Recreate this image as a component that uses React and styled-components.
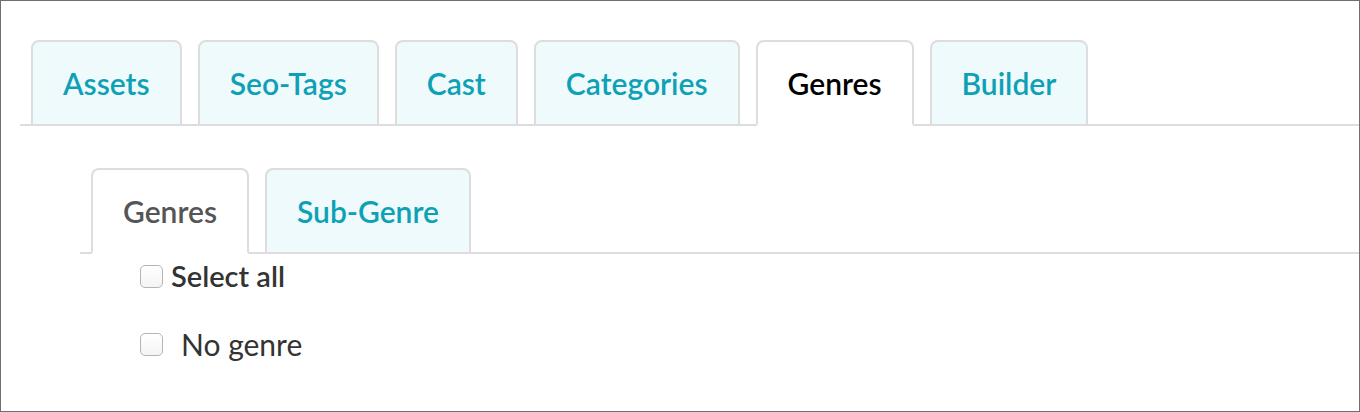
import { useState } from 'react';
import styled, { createGlobalStyle } from 'styled-components';

const GlobalStyle = createGlobalStyle`
  body {
    margin: 0;
    font-family: Lato, "Open Sans", sans-serif;
    background: #fff;
  }
`;

const Frame = styled.div`
  box-sizing: border-box;
  width: 1360px;
  height: 412px;
  border: 1px solid #6f6f6f;
  padding: 39px 0 0 19px;
  overflow: hidden;
`;

const TabBar = styled.ul`
  display: flex;
  gap: 16px;
  list-style: none;
  margin: 0;
  padding: 0 0 0 11px;
  border-bottom: 2px solid #dddddd;
`;

const Tab = styled.li`
  box-sizing: border-box;
  margin-bottom: -2px;
  padding: 21px 30px 20px;
  font-size: 30px;
  font-weight: 600;
  line-height: 41px;
  border: 2px solid #dddddd;
  border-bottom-color: ${({ $active }) => ($active ? 'transparent' : '#dddddd')};
  border-radius: 8px 8px 0 0;
  background: ${({ $active }) => ($active ? '#ffffff' : '#eefafc')};
  color: ${({ $active, $activeColor }) => ($active ? $activeColor : '#0ea1b5')};
  cursor: pointer;
  white-space: nowrap;
`;

const SubPanel = styled.div`
  margin: 42px 0 0 60px;
`;

const CheckList = styled.div`
  padding: 10px 0 0 60px;
  display: flex;
  flex-direction: column;
  gap: 44px;
`;

const CheckRow = styled.label`
  display: flex;
  align-items: center;
  gap: ${({ $gap }) => $gap}px;
  font-size: ${({ $bold }) => ($bold ? 29 : 30)}px;
  line-height: 24px;
  color: #333333;
  font-weight: ${({ $bold }) => ($bold ? 600 : 400)};
  cursor: pointer;
`;

const Box = styled.span`
  box-sizing: border-box;
  width: 23px;
  height: 23px;
  border: 1.5px solid #b4b4b4;
  border-radius: 5px;
  background: linear-gradient(#ffffff, #f4f4f4);
  flex: none;
`;

const mainTabs = ['Assets', 'Seo-Tags', 'Cast', 'Categories', 'Genres', 'Builder'];
const subTabs = ['Genres', 'Sub-Genre'];

const App = () => {
  const [mainTab, setMainTab] = useState('Genres');
  const [subTab, setSubTab] = useState('Genres');

  return (
    <>
      <GlobalStyle />
      <Frame>
        <TabBar>
          {mainTabs.map((t) => (
            <Tab key={t} $active={mainTab === t} $activeColor="#000000" onClick={() => setMainTab(t)}>
              {t}
            </Tab>
          ))}
        </TabBar>
        <SubPanel>
          <TabBar>
            {subTabs.map((t) => (
              <Tab key={t} $active={subTab === t} $activeColor="#555555" onClick={() => setSubTab(t)}>
                {t}
              </Tab>
            ))}
          </TabBar>
          <CheckList>
            <CheckRow $bold $gap={8}>
              <Box />
              Select all
            </CheckRow>
            <CheckRow $gap={18}>
              <Box />
              No genre
            </CheckRow>
          </CheckList>
        </SubPanel>
      </Frame>
    </>
  );
};

export default App;
